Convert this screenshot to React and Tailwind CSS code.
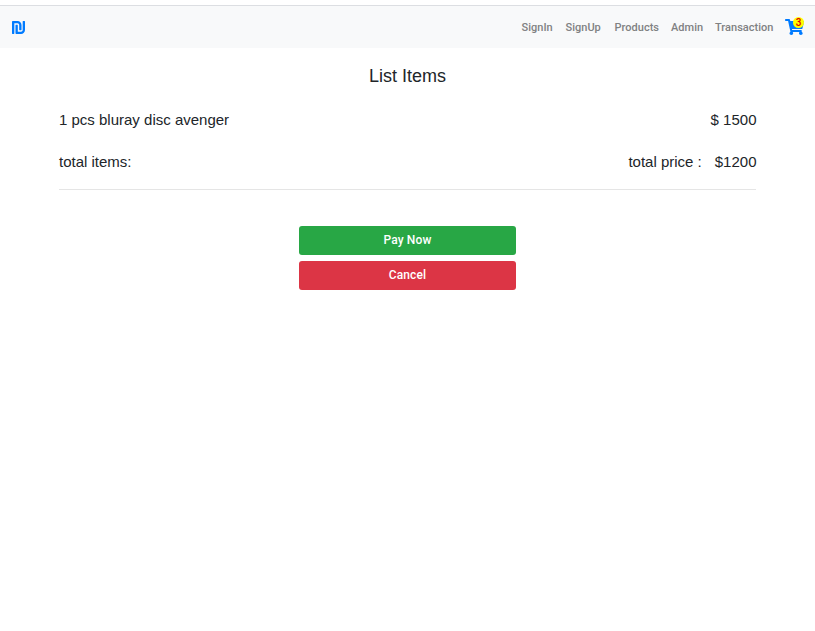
import { FaShekelSign, FaShoppingCart } from "react-icons/fa";

const links = [
  { label: "SignIn", width: "w-[32px]" },
  { label: "SignUp", width: "w-[37px]" },
  { label: "Products", width: "w-[44.5px]" },
  { label: "Admin", width: "w-[32px]" },
  { label: "Transaction", width: "w-[58px]" },
];

export default function App() {
  return (
    <div className="min-h-[631px] bg-white pt-[5px] font-['Liberation_Sans',Arial,sans-serif] text-[15px] leading-[22px] text-[#212529]">
      <nav className="flex h-[43px] items-center justify-between border-t border-[#dcdee2] bg-[#f8f9fa] pr-[11px] pl-3">
        <FaShekelSign className="h-[15px] w-[13px] text-[#007bff]" />
        <div className="flex items-center gap-3">
          {links.map((link) => (
            <a key={link.label} href="#" className={`${link.width} pt-0.5 whitespace-nowrap font-[Roboto,sans-serif] text-[11px] leading-4 font-medium tracking-[0.02px] text-[#808182]`}>
              {link.label}
            </a>
          ))}
          <a href="#" className="relative block h-[18px] w-[19px] pt-px text-[#007bff]">
            <FaShoppingCart preserveAspectRatio="none" className="h-4 w-[19px]" />
            <span className="absolute top-[-1px] right-0 flex h-[11px] w-[11px] items-center justify-center rounded-full bg-[#ffff00] font-[Roboto,sans-serif] text-[10px] leading-none font-medium text-[#e00000]">3</span>
          </a>
        </div>
      </nav>
      <main className="px-[59px] pt-4">
        <h1 className="text-center text-[18px] leading-6">List Items</h1>
        <div className="mt-[21px] flex justify-between">
          <span>1 pcs bluray disc avenger</span>
          <span className="-mr-[0.5px]">$ 1500</span>
        </div>
        <div className="mt-5 flex justify-between border-b border-[#e5e5e5] pb-4">
          <span>total items:</span>
          <span className="-mr-[0.5px] flex gap-[13px]"><span>total price :</span><span>$1200</span></span>
        </div>
        <div className="mx-auto mt-9 flex w-[217px] flex-col gap-1.5 font-[Roboto,sans-serif] text-xs font-medium tracking-[0.12px] text-white">
          <button className="h-[29px] rounded-[3px] bg-[#28a745] pb-0.5">Pay Now</button>
          <button className="h-[29px] rounded-[3px] bg-[#dc3545] pb-0.5">Cancel</button>
        </div>
      </main>
    </div>
  );
}
